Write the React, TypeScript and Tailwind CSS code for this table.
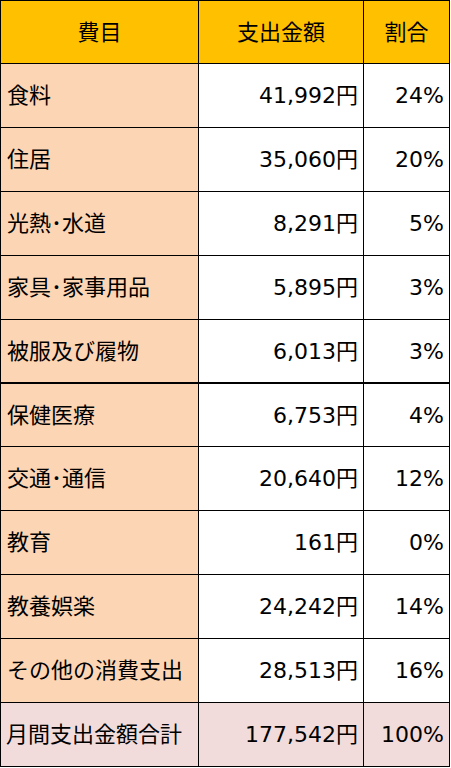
import React from "react";

const rows: [string, string, string][] = [
  ["食料", "41,992円", "24%"],
  ["住居", "35,060円", "20%"],
  ["光熱･水道", "8,291円", "5%"],
  ["家具･家事用品", "5,895円", "3%"],
  ["被服及び履物", "6,013円", "3%"],
  ["保健医療", "6,753円", "4%"],
  ["交通･通信", "20,640円", "12%"],
  ["教育", "161円", "0%"],
  ["教養娯楽", "24,242円", "14%"],
  ["その他の消費支出", "28,513円", "16%"],
];

export default function App() {
  return (
    <div className="w-[451px] h-[768px] bg-white">
      <div
        className="w-[450px] border-l border-t border-black text-[22px] text-black"
        style={{ fontFamily: "'DejaVu Sans', 'Noto Sans CJK JP', sans-serif" }}
      >
        <div className="grid grid-cols-[198px_165px_86px] h-[63px] bg-[#FFC000]">
          <div className="border-r border-b border-black flex items-center justify-center">費目</div>
          <div className="border-r border-b border-black flex items-center justify-center">支出金額</div>
          <div className="border-r border-b border-black flex items-center justify-center">割合</div>
        </div>
        {rows.map((r, i) => {
          const thick = i === 4;
          const short = i === 5;
          const h = short ? "h-[63px]" : "h-[64px]";
          const b = thick ? "border-b-2" : "border-b";
          return (
            <div key={i} className={`grid grid-cols-[198px_165px_86px] ${h}`}>
              <div className={`bg-[#FCD5B4] border-r ${b} border-black flex items-center pl-[6px] whitespace-nowrap`}>{r[0]}</div>
              <div className={`bg-white border-r ${b} border-black flex items-center justify-end pr-[5px]`}>{r[1]}</div>
              <div className={`bg-white border-r ${b} border-black flex items-center justify-end pr-[5px]`}>{r[2]}</div>
            </div>
          );
        })}
        <div className="grid grid-cols-[198px_165px_86px] h-[64px] bg-[#F2DCDB]">
          <div className="border-r border-b border-black flex items-center pl-[5px] whitespace-nowrap">月間支出金額合計</div>
          <div className="border-r border-b border-black flex items-center justify-end pr-[5px]">177,542円</div>
          <div className="border-r border-b border-black flex items-center justify-end pr-[5px]">100%</div>
        </div>
      </div>
    </div>
  );
}
